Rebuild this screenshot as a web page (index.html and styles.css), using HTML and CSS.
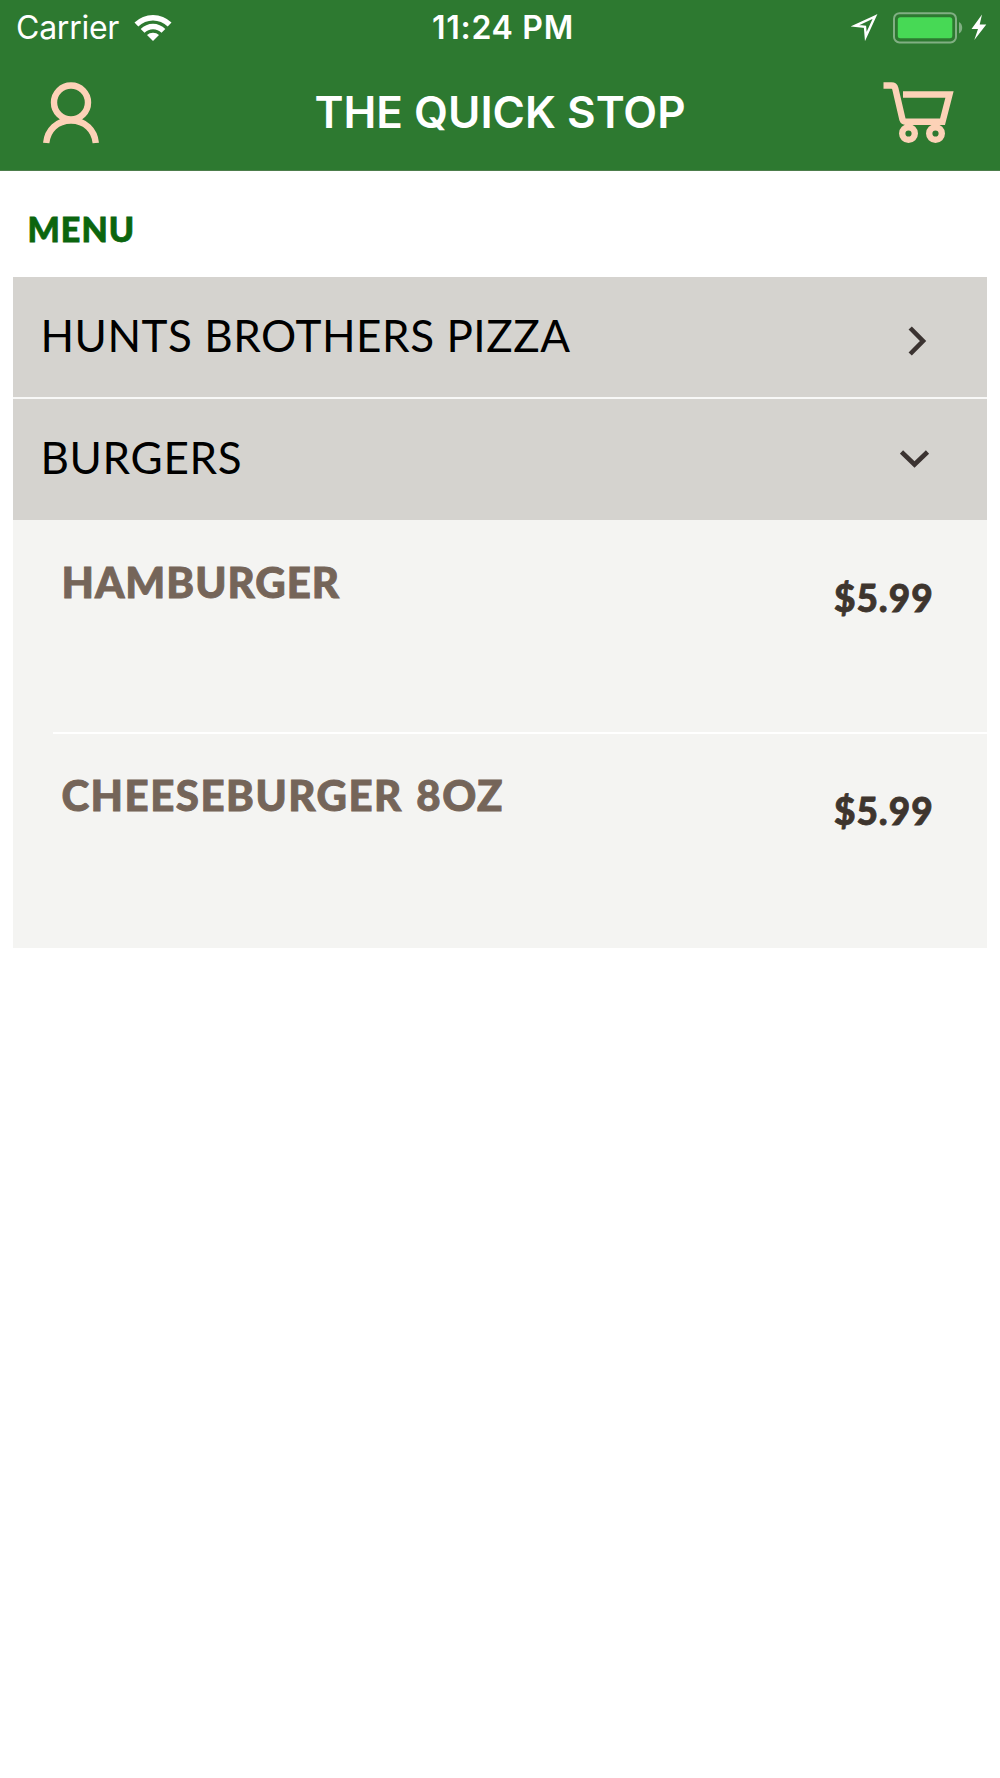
FILE: index.html
```html
<!DOCTYPE html>
<html lang="en">
<head>
    <meta charset="UTF-8">
    <meta name="viewport" content="width=device-width, initial-scale=1.0">
    <title>The Quick Stop</title>
    <link rel="stylesheet" href="styles.css">
</head>
<body>
    <header class="header">
        <div class="status-bar">
            <div class="status-left">
                <span class="carrier">Carrier</span>
                <svg class="wifi" width="38" height="28" viewBox="0 0 38 28">
                    <path d="M0.5 8.6 A26.5 26.5 0 0 1 37.5 8.6 L33.7 12.5 A21 21 0 0 0 4.3 12.5 Z"/>
                    <path d="M6.7 14.9 A17.5 17.5 0 0 1 31.3 14.9 L27.5 18.7 A12 12 0 0 0 10.5 18.7 Z"/>
                    <path d="M13 21 A8.8 8.8 0 0 1 25 21 L19 27 Z"/>
                </svg>
            </div>
            <span class="time">11:24 PM</span>
            <div class="status-right">
                <svg class="location" width="27" height="27" viewBox="0 0 27 27">
                    <path d="M24 2.5 L4 11.8 L14 12.8 L14.8 22.5 Z"/>
                </svg>
                <svg class="battery" width="71" height="32" viewBox="0 0 71 32">
                    <rect class="battery-frame" x="1" y="1.2" width="62" height="29.2" rx="5.5"/>
                    <path class="battery-tip" d="M66 10 A6 6.5 0 0 1 66 21.5 Z"/>
                    <rect class="battery-level" x="4.8" y="5.2" width="54.5" height="21" rx="2.5"/>
                </svg>
                <svg class="bolt" width="16" height="27" viewBox="0 0 16 27">
                    <path d="M11 0.5 L0.5 15 H7 L3.3 26 L15.3 10.5 H8.7 Z"/>
                </svg>
            </div>
        </div>
        <div class="nav-bar">
            <svg class="profile" width="58" height="62" viewBox="0 0 58 62">
                <circle cx="29" cy="20.5" r="17"/>
                <path d="M4.2 61 C5.5 48 15 38.5 29 38.5 S52.5 48 53.8 61"/>
            </svg>
            <h1 class="title">THE QUICK STOP</h1>
            <svg class="cart" width="72" height="62" viewBox="0 0 72 62">
                <path d="M1.5 3.5 H9.5 Q12.5 3.5 13.3 6.5 L20.5 37.5 Q21.3 39.7 23.5 39.7 H60.5 L67.5 12.5 H21"/>
                <circle cx="26.5" cy="51.5" r="6.3"/>
                <circle cx="53.5" cy="51.5" r="6.3"/>
            </svg>
        </div>
    </header>

    <main class="menu">
        <h2 class="menu-title">MENU</h2>
        <div class="category">
            <span class="category-name">HUNTS BROTHERS PIZZA</span>
            <svg class="arrow" width="30" height="30" viewBox="0 0 30 30">
                <path d="M10.2 2 L23 15 L10.2 28"/>
            </svg>
        </div>
        <div class="category open">
            <span class="category-name">BURGERS</span>
            <svg class="arrow" width="30" height="30" viewBox="0 0 30 30">
                <path d="M1.5 9 L14.5 21.5 L27.5 9"/>
            </svg>
        </div>
        <div class="items">
            <div class="item">
                <span class="item-name">HAMBURGER</span>
                <span class="item-price">$5.99</span>
            </div>
            <div class="item">
                <span class="item-name long">CHEESEBURGER 8OZ</span>
                <span class="item-price">$5.99</span>
            </div>
        </div>
    </main>
</body>
</html>
```
FILE: styles.css
```css
* {
    box-sizing: border-box;
}

body {
    margin: 0;
    background-color: #fff;
    font-family: Lato, "Open Sans", sans-serif;
}

svg {
    display: block;
    flex-shrink: 0;
}

/* Header */
.header {
    height: 171px;
    background-color: #2d7930;
    border-bottom: 1px solid #4c7d4b;
    color: #fff;
    font-family: Inter, Roboto, sans-serif;
}

.status-bar {
    display: grid;
    grid-template-columns: 1fr auto 1fr;
    align-items: center;
    height: 55px;
    padding: 0 13px 0 16px;
    font-size: 32px;
    line-height: 55px;
}

.status-left {
    display: flex;
    align-items: center;
    gap: 15px;
}

.carrier {
    letter-spacing: -0.25px;
}

.wifi,
.bolt {
    fill: #fff;
}

.time {
    padding-left: 3px;
    font-weight: 600;
    letter-spacing: 0.7px;
}

.status-right {
    display: flex;
    justify-content: flex-end;
    align-items: center;
}

.location {
    margin-right: 15px;
    fill: none;
    stroke: #fff;
    stroke-width: 2.4;
}

.battery {
    margin-right: 7px;
}

.battery-frame {
    fill: none;
    stroke: #81af83;
    stroke-width: 2;
}

.battery-tip {
    fill: #81af83;
}

.battery-level {
    fill: #47d955;
}

.nav-bar {
    display: grid;
    grid-template-columns: 1fr auto 1fr;
    align-items: center;
    height: 115px;
    padding: 0 46px 0 42px;
}

.profile,
.cart {
    fill: none;
    stroke: #fcd2b7;
    stroke-width: 6.4;
}

.cart {
    justify-self: end;
}

.title {
    margin: 0;
    padding: 0 0 2px 4px;
    font-size: 44px;
    font-weight: 600;
}

/* Menu */
.menu {
    padding: 0 13.4px;
}

.menu-title {
    margin: 0;
    height: 106px;
    padding: 5px 14px 0;
    line-height: 105px;
    font-size: 34px;
    font-weight: 900;
    letter-spacing: 1.1px;
    color: #0b650e;
    -webkit-text-stroke: 0.8px #0b650e;
}

.category {
    display: flex;
    justify-content: space-between;
    height: 122px;
    padding: 0 57px 0 27px;
    background-color: #d5d3cf;
    border-bottom: 2px solid #f8f8f7;
}

.category-name {
    line-height: 116px;
    font-size: 44px;
    letter-spacing: 0.55px;
    color: #000;
}

.arrow {
    margin-top: 49px;
    fill: none;
    stroke: #3b3331;
    stroke-width: 4.6;
}

.open {
    height: 121px;
    border-bottom: none;
}

.open .category-name {
    letter-spacing: 0.7px;
}

.open .arrow {
    margin-top: 43.5px;
}

/* Items */
.items {
    background-color: #f4f4f2;
}

.item {
    display: flex;
    justify-content: space-between;
    height: 212px;
    margin-left: 40px;
    padding: 37px 53px 0 8px;
}

.item + .item {
    height: 215.5px;
    padding-top: 36px;
    border-top: 2px solid #fff;
}

.item-name {
    line-height: 50px;
    font-size: 42px;
    font-weight: 900;
    letter-spacing: 1px;
    color: #756559;
    -webkit-text-stroke: 0.9px #756559;
}

.long {
    letter-spacing: 1.5px;
    word-spacing: 2px;
}

.item-price {
    margin-top: 15.5px;
    line-height: 50px;
    font-size: 37px;
    font-weight: 900;
    letter-spacing: 1px;
    color: #3e352e;
    -webkit-text-stroke: 0.8px #3e352e;
}
```
